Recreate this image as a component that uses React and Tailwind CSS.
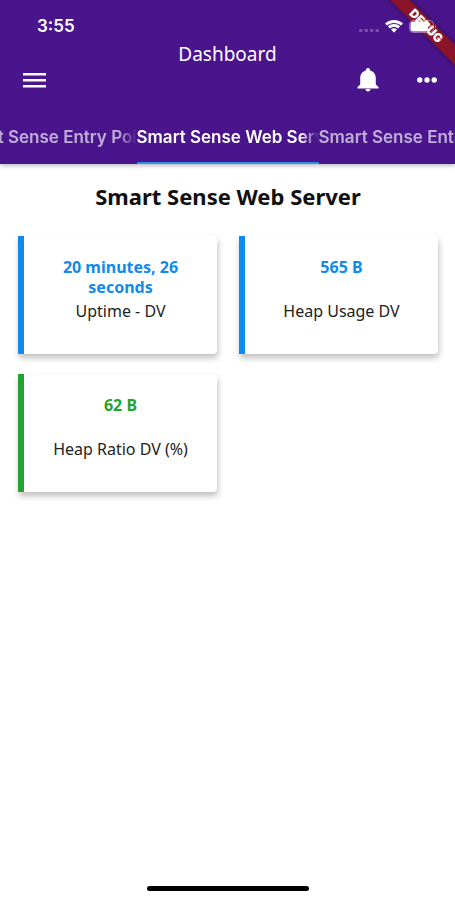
import React, { useState } from 'react';

const TABS = ['Smart Sense Entry Point', 'Smart Sense Web Server', 'Smart Sense Entry Door'];

const METRICS = [
    { label: 'Uptime - DV', value: '20 minutes, 26 seconds', tone: 'blue' },
    { label: 'Heap Usage DV', value: '565 B', tone: 'blue' },
    { label: 'Heap Ratio DV (%)', value: '62 B', tone: 'green' }
];

const TONES = {
    blue: { border: 'border-[#0e8af0]', text: 'text-[#0e8af0]' },
    green: { border: 'border-[#22a32f]', text: 'text-[#22a32f]' }
};

const StatusBar = () => (
    <div className="relative z-10 flex h-11 items-center justify-between pt-2 pr-[18px] pl-[37px]">
        <span className="font-['Inter',sans-serif] text-[17px] leading-5 font-semibold">3:55</span>
        <div className="flex items-center gap-[6px]">
            <svg viewBox="0 0 20 3" className="mt-2 h-[3px] w-5 fill-white/25">
                <rect x="0" y="0" width="3.5" height="3" rx="1" />
                <rect x="5.5" y="0" width="3.5" height="3" rx="1" />
                <rect x="11" y="0" width="3.5" height="3" rx="1" />
                <rect x="16.5" y="0" width="3.5" height="3" rx="1" />
            </svg>
            <svg viewBox="0 0 18 13" className="h-[13px] w-[18px] fill-white">
                <path d="M9 0C5.6 0 2.4 1.3 0 3.4l2 2.1C3.9 3.8 6.3 2.9 9 2.9s5.1.9 7 2.6l2-2.1C15.6 1.3 12.4 0 9 0z" />
                <path d="M9 4.1c-2.3 0-4.4.8-6 2.3l2 2.1C6.100 7.500 7.500 7 9 7s2.900.5 4 1.500l2-2.100C13.400 4.900 11.300 4.100 9 4.100z" />
                <path d="M9 8.200c-1.200 0-2.200.4-3 1.100l3 3.500 3-3.500c-.8-.7-1.800-1.100-3-1.100z" />
            </svg>
            <svg viewBox="0 0 28 13" className="h-[13px] w-7">
                <rect x="0.5" y="0.5" width="24" height="12" rx="3.5" className="fill-none stroke-white/40" />
                <rect x="1.5" y="1.5" width="17.500" height="10" rx="2.500" className="fill-white" />
                <path d="M26 4.500c1.300.4 1.300 3.600 0 4z" className="fill-white/40" />
            </svg>
        </div>
    </div>
);

const Toolbar = () => (
    <div className="flex h-8 items-center justify-between pr-[18px] pl-[23px]">
        <button type="button" aria-label="Open menu">
            <svg viewBox="0 0 24 16" className="h-4 w-6 fill-white">
                <path d="M0 1h23v2.600H0zM0 7h23v2.600H0zM0 13h23v2.600H0z" />
            </svg>
        </button>
        <div className="flex items-center gap-[38px]">
            <button type="button" aria-label="Notifications">
                <svg viewBox="0 0 22 24" className="h-6 w-[22px] fill-white">
                    <path d="M11 23.500c1.400 0 2.500-1 2.500-2.500h-5c0 1.500 1.100 2.500 2.500 2.500zM18.800 16.500v-6.300c0-3.900-2.200-6.700-5.700-7.600v-.6C13.100.9 12.200 0 11 0S8.900.9 8.900 2v.6C5.400 3.500 3.200 6.300 3.200 10.200v6.300L.5 19v1.400h21V19z" />
                </svg>
            </button>
            <button type="button" aria-label="More options">
                <svg viewBox="0 0 20 6" className="h-[6px] w-5 fill-white">
                    <circle cx="2.8" cy="3" r="2.7" />
                    <circle cx="10" cy="3" r="2.7" />
                    <circle cx="17.2" cy="3" r="2.7" />
                </svg>
            </button>
        </div>
    </div>
);

const MetricCard = ({ label, value, tone }) => (
    <article
        className={`rounded-r-[4px] border-l-[6px] bg-white px-6 pt-[21px] pb-[33px] text-center shadow-[1px_4px_6px_rgba(0,0,0,0.25)] ${TONES[tone].border}`}
    >
        <p className={`min-h-10 text-[16px] leading-5 font-bold ${TONES[tone].text}`}>{value}</p>
        <p className="mt-1 text-[16px] leading-5 whitespace-nowrap text-[#222222]">{label}</p>
    </article>
);

const App = () => {
    const [activeTab, setActiveTab] = useState(1);

    return (
        <div className="relative flex min-h-screen flex-col overflow-hidden bg-white font-['Noto_Sans',sans-serif]">
            <header className="bg-[#4a148c] text-white shadow-[0_1px_5px_rgba(0,0,0,0.35)]">
                <StatusBar />
                <h1 className="text-center text-[19px] leading-5">Dashboard</h1>
                <Toolbar />
                <nav className="mt-4 flex justify-center overflow-hidden font-['Inter',sans-serif]">
                    {TABS.map((tab, index) => (
                        <button
                            key={tab}
                            type="button"
                            onClick={() => setActiveTab(index)}
                            className={`w-2/5 shrink-0 border-b-2 py-[15px] text-left text-[17px] leading-5 font-semibold ${
                                index === activeTab ? 'border-[#2b8cf5] text-white' : 'border-transparent text-white/65'
                            }`}
                        >
                            <span className="block overflow-hidden whitespace-nowrap mask-r-from-90%">{tab}</span>
                        </button>
                    ))}
                </nav>
            </header>

            <main className="pr-[17px] pl-[18px]">
                <h2 className="pt-5 text-center text-[22px] leading-6 font-bold text-[#111111]">{TABS[activeTab]}</h2>
                <section className="mt-7 grid grid-cols-2 gap-x-[22px] gap-y-5">
                    {METRICS.map((metric) => (
                        <MetricCard key={metric.label} {...metric} />
                    ))}
                </section>
            </main>

            <div className="mx-auto mt-auto mb-[9px] h-[5px] w-[162px] rounded-full bg-black" />

            {/* debug ribbon across the top right corner, under the battery */}
            <div className="pointer-events-none absolute top-[19px] -right-[31px] w-[120px] rotate-45 bg-[#8b1428] text-center font-['Inter',sans-serif] text-[12px] leading-[14px] font-black text-white shadow-[0_0_6px_rgba(0,0,0,0.4)]">
                DEBUG
            </div>
        </div>
    );
};

export default App;
